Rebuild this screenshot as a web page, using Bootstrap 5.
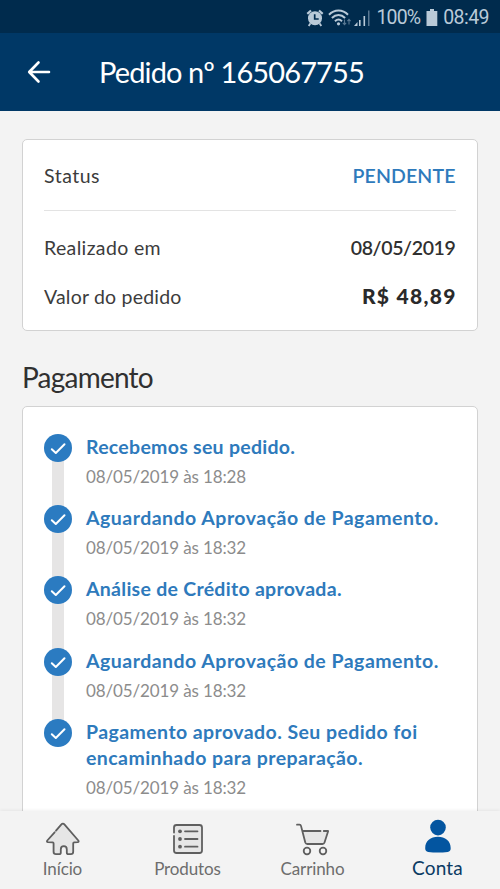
<!DOCTYPE html>
<html lang="pt-BR">
<head>
<meta charset="utf-8">
<meta name="viewport" content="width=device-width, initial-scale=1">
<title>Pedido nº 165067755</title>
<link href="https://cdn.jsdelivr.net/npm/bootstrap@5.3.0/dist/css/bootstrap.min.css" rel="stylesheet">
<style>
  body { font-family: Lato, "Open Sans", sans-serif; font-size: 19.5px; line-height: 26.5px; color: #3c3c3c; background: #f3f3f3; }
  .screen { height: 889px; }
  .status-bar { height: 33px; background: #002b4d; color: #b9cad8; font: 400 19.5px/33px Roboto, sans-serif; padding: 2px 11px 0 0; }
  .signal { margin-left: 2px; }
  .battery-level { letter-spacing: -.85px; margin: 0 6px 0 5.5px; }
  .clock { letter-spacing: -.55px; margin-left: 5px; }
  .app-bar { height: 78px; background: #003866; color: #fff; padding-left: 27px; }
  .app-title { font-size: 29px; line-height: 36px; letter-spacing: -.88px; margin-left: 48px; }
  .content { padding: 28px 22.5px 0 22px; }
  .panel { --bs-card-border-color: #d2d2d2; --bs-card-border-width: 1.5px; --bs-card-border-radius: 5px; color: inherit; }
  .order-summary { height: 192px; padding: 2px 21px 0; }
  .status-row { height: 69px; border-bottom: 1px solid #e3e3e3; flex: none; }
  .detail-row { height: 49px; flex: none; }
  .first-detail { margin-top: 13px; }
  .key { letter-spacing: .2px; }
  .status-row .key { letter-spacing: .5px; }
  .wide { letter-spacing: .36px; }
  .order-state { color: #2e7abc; font-weight: 600; letter-spacing: .13px; }
  .order-date { color: #303030; font-weight: 600; letter-spacing: -.36px; }
  .order-total { color: #2a2a2a; font-size: 21px; font-weight: 900; letter-spacing: 1.3px; margin-right: -1.3px; position: relative; top: -1px; }
  .section-title { font-size: 28px; line-height: 36px; letter-spacing: -.78px; color: #303030; margin: 27.5px 0 11.5px; font-weight: 400; }
  .timeline-card { height: 500px; padding: 26.7px 21px 0; }
  .step { min-height: 71.3px; }
  .step-mark { width: 28px; margin-right: 14px; }
  .step-mark svg { flex: none; z-index: 1; }
  .rail { width: 12.5px; background: #e6e5e5; margin: -2px 0; }
  .step-title { color: #2e7abc; font-weight: 700; letter-spacing: .42px; }
  .snug { letter-spacing: .28px; }
  .loose { letter-spacing: .48px; }
  .step-time { color: #8c8c8c; font-size: 17px; line-height: 24px; letter-spacing: -.13px; margin-top: 4.5px; }
  .tab-bar { height: 78px; background: #f3f3f3; box-shadow: 0 -1px 3px rgba(0,0,0,.06); z-index: 2; }
  .tab { width: 125px; font-size: 17px; line-height: 22px; color: #6d6d6d; padding-top: 10px; text-decoration: none; }
  .tab span { margin-top: 1px; letter-spacing: -.12px; }
  .tab.current { color: #0b3a63; font-size: 19px; padding-top: 7px; }
  .tab.current span { margin-top: 3px; letter-spacing: .2px; }
</style>
</head>
<body>
<div class="screen d-flex flex-column overflow-hidden">
  <div class="status-bar d-flex align-items-center justify-content-end flex-shrink-0">
    <svg width="18" height="18" viewBox="0 0 18 18" fill="none" stroke="currentColor"><circle cx="9" cy="9.300" r="7" fill="currentColor" stroke="none"/><path d="M1.300 4.900 5 1.500M16.700 4.900 13 1.500" stroke-width="2.200"/><path d="m4.300 14.500-1.600 2.500M13.700 14.500l1.600 2.500" stroke-width="1.800"/><path d="M8.700 5.300V10h4" stroke="#002b4d" stroke-width="1.700"/></svg>
    <svg width="24" height="18" viewBox="0 0 24 18" fill="none" stroke="currentColor" stroke-width="2" class="ms-1"><path d="M1 5.800C6.300.2 14.700.2 20 5.800M3.900 9c3.900-3.900 9.300-3.900 13.200 0M7 12.200c2.100-2.100 4.900-2.100 7 0"/><circle cx="10.500" cy="14.800" r="1.600" fill="currentColor" stroke="none"/><path d="M16.500 10.500v5m-1.600-1.700 1.600 1.800 1.600-1.800M21 15.500v-5m-1.600 1.700 1.600-1.800 1.600 1.800" stroke="#587791" stroke-width="1.100"/></svg>
    <svg class="signal" width="17" height="18" viewBox="0 0 17 18" fill="currentColor"><path d="M0 17h3.500v-4ZM5 11h1.600v6H5ZM9.500 7h1.600v10H9.500Z"/><path d="M14 1.500h1.500V17H14Z" fill="#587791"/></svg>
    <span class="battery-level">100%</span>
    <svg width="12" height="17" viewBox="0 0 12 17" fill="currentColor"><path d="M4 0h4v2h3.300v15H.5V2H4Z"/></svg>
    <span class="clock">08:49</span>
  </div>

  <header class="app-bar d-flex align-items-center flex-shrink-0">
    <svg width="24" height="24" viewBox="0 0 24 24" fill="none" stroke="#fff" stroke-width="2.600" stroke-linecap="round" stroke-linejoin="round"><path d="M22 12H2.300M11.500 2.500 2.200 12l9.300 9.500"/></svg>
    <h1 class="app-title mb-0 fw-normal">Pedido nº 165067755</h1>
  </header>

  <main class="content flex-grow-1 overflow-hidden">
    <section class="card panel order-summary">
      <div class="status-row d-flex justify-content-between align-items-center">
        <span class="key">Status</span><span class="order-state">PENDENTE</span>
      </div>
      <div class="detail-row first-detail d-flex justify-content-between align-items-center">
        <span class="key wide">Realizado em</span><span class="order-date">08/05/2019</span>
      </div>
      <div class="detail-row d-flex justify-content-between align-items-center">
        <span class="key">Valor do pedido</span><span class="order-total">R$ 48,89</span>
      </div>
    </section>

    <h2 class="section-title">Pagamento</h2>

    <section class="card panel timeline-card">
      <div class="step d-flex">
        <div class="step-mark d-flex flex-column align-items-center"><svg width="28" height="28" viewBox="0 0 28 28"><use href="#done"/></svg><div class="rail flex-grow-1"></div></div>
        <div><div class="step-title snug">Recebemos seu pedido.</div><div class="step-time">08/05/2019 às 18:28</div></div>
      </div>
      <div class="step d-flex">
        <div class="step-mark d-flex flex-column align-items-center"><svg width="28" height="28" viewBox="0 0 28 28"><use href="#done"/></svg><div class="rail flex-grow-1"></div></div>
        <div><div class="step-title loose">Aguardando Aprovação de Pagamento.</div><div class="step-time">08/05/2019 às 18:32</div></div>
      </div>
      <div class="step d-flex">
        <div class="step-mark d-flex flex-column align-items-center"><svg width="28" height="28" viewBox="0 0 28 28"><use href="#done"/></svg><div class="rail flex-grow-1"></div></div>
        <div><div class="step-title snug">Análise de Crédito aprovada.</div><div class="step-time">08/05/2019 às 18:32</div></div>
      </div>
      <div class="step d-flex">
        <div class="step-mark d-flex flex-column align-items-center"><svg width="28" height="28" viewBox="0 0 28 28"><use href="#done"/></svg><div class="rail flex-grow-1"></div></div>
        <div><div class="step-title loose">Aguardando Aprovação de Pagamento.</div><div class="step-time">08/05/2019 às 18:32</div></div>
      </div>
      <div class="step d-flex">
        <div class="step-mark d-flex flex-column align-items-center"><svg width="28" height="28" viewBox="0 0 28 28"><g id="done"><circle cx="14" cy="14" r="14" fill="#2b7bc1"/><path d="m7.800 15.300 4 3.700 8.700-8.700" fill="none" stroke="#fff" stroke-width="2" stroke-linecap="round" stroke-linejoin="round"/></g></svg></div>
        <div><div class="step-title">Pagamento aprovado. Seu pedido foi<br>encaminhado para preparação.</div><div class="step-time">08/05/2019 às 18:32</div></div>
      </div>
    </section>
  </main>

  <nav class="tab-bar d-flex flex-shrink-0">
    <a class="tab d-flex flex-column align-items-center" href="#">
      <svg width="36" height="36" viewBox="0 0 36 36" fill="#e6e6e6" stroke="#5f5f5f" stroke-width="1.800" stroke-linecap="round" stroke-linejoin="round"><path stroke="none" d="M18 2.500 2.500 19.500 7.500 21v12H15v-6h6v6h7V21l5.500-1.500Z"/><path fill="none" d="m11 9.700 5.200-6.100q1.700-2 3.400 0l13.700 15.900q1 1.400-.7 1.600l-3.400.3q-1 .1-1 1.200v8.200q0 2.400-2.400 2.400h-2.200q-1.800 0-1.800-1.800v-3q0-3.200-3-3.200t-3 3.200v3q0 1.800-1.800 1.800H11q-2.400 0-2.400-2.400v-8.200q0-1.100-1-1.200L3 21.100q-1.700-.2-.7-1.600l7.300-8.200"/></svg>
      <span>Início</span>
    </a>
    <a class="tab d-flex flex-column align-items-center" href="#">
      <svg width="36" height="36" viewBox="0 0 36 36" fill="none" stroke="#5f5f5f" stroke-width="1.800" stroke-linecap="round"><rect x="4" y="4" width="28" height="28" rx="2" fill="#e6e6e6" stroke="none"/><path d="M4 11.500V6.500Q4 4 6.500 4h23Q32 4 32 6.500v23q0 2.500-2.500 2.500h-23Q4 32 4 29.500V15M15 10.300h12.500M15 18h12.500M15 25.700h12.500"/><g fill="#5f5f5f" stroke="none"><circle cx="10" cy="10.300" r="1.900"/><circle cx="10" cy="18" r="1.900"/><circle cx="10" cy="25.700" r="1.900"/></g></svg>
      <span>Produtos</span>
    </a>
    <a class="tab d-flex flex-column align-items-center" href="#">
      <svg width="36" height="36" viewBox="0 0 36 36" fill="none" stroke="#5f5f5f" stroke-width="1.800" stroke-linecap="round" stroke-linejoin="round"><path fill="#e6e6e6" stroke="none" d="M7.500 9.500H33L29 23H11Z"/><path d="M2 3.700h2.500q1.200 0 1.500 1.200l4.300 16.600q.5 1.500 2 1.500h15.200q1.500 0 2-1.500L33.200 10h-4.400M7.500 10h18"/><circle cx="12" cy="30" r="3.300"/><circle cx="28" cy="30" r="3.300"/></svg>
      <span>Carrinho</span>
    </a>
    <a class="tab current d-flex flex-column align-items-center" href="#">
      <svg width="36" height="36" viewBox="0 0 36 36" fill="#0355a0"><circle cx="18" cy="9.600" r="7.800"/><path d="M5.200 30.300c0-7.500 5.500-11.500 12.700-11.500S30.700 22.800 30.700 30.300q0 3.200-3 3.700-9.800 1-19.500 0-3-.5-3-3.700Z"/></svg>
      <span>Conta</span>
    </a>
  </nav>
</div>
<script src="https://cdn.jsdelivr.net/npm/bootstrap@5.3.0/dist/js/bootstrap.bundle.min.js"></script>
</body>
</html>
